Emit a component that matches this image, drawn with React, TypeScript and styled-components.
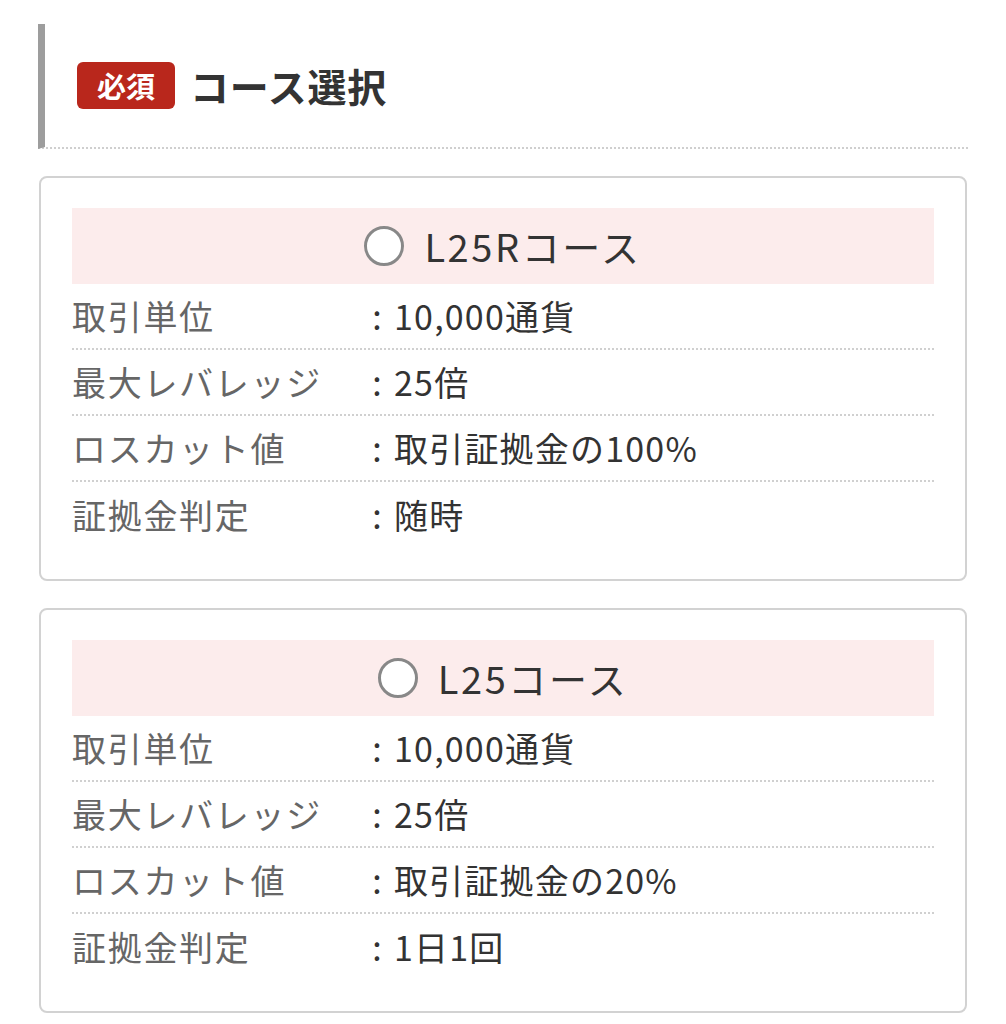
import React from 'react';
import styled, { createGlobalStyle } from 'styled-components';

const GlobalStyle = createGlobalStyle`
  * {
    box-sizing: border-box;
  }

  body {
    margin: 0;
    background: #fff;
    font-family: "Noto Sans CJK JP", "Noto Sans", sans-serif;
  }
`;

type Course = {
  name: string;
  rows: { label: string; value: string }[];
};

const courses: Course[] = [
  {
    name: 'L25Rコース',
    rows: [
      { label: '取引単位', value: '10,000通貨' },
      { label: '最大レバレッジ', value: '25倍' },
      { label: 'ロスカット値', value: '取引証拠金の100%' },
      { label: '証拠金判定', value: '随時' },
    ],
  },
  {
    name: 'L25コース',
    rows: [
      { label: '取引単位', value: '10,000通貨' },
      { label: '最大レバレッジ', value: '25倍' },
      { label: 'ロスカット値', value: '取引証拠金の20%' },
      { label: '証拠金判定', value: '1日1回' },
    ],
  },
];

export default function App() {
  return (
    <>
      <GlobalStyle />
      <Page>
        <SectionHeader>
          <Badge>必須</Badge>
          <SectionTitle>コース選択</SectionTitle>
        </SectionHeader>

        <CourseList>
          {courses.map((course) => (
            <CourseCard key={course.name}>
              <CourseHead>
                <Radio />
                <CourseName>{course.name}</CourseName>
              </CourseHead>
              {course.rows.map((row) => (
                <SpecRow key={row.label}>
                  <SpecLabel>{row.label}</SpecLabel>
                  <Colon>:</Colon>
                  <SpecValue>{row.value}</SpecValue>
                </SpecRow>
              ))}
            </CourseCard>
          ))}
        </CourseList>
      </Page>
    </>
  );
}

const Page = styled.div`
  padding: 24px 38px 0 38px;
`;

const SectionHeader = styled.div`
  display: flex;
  align-items: center;
  height: 125px;
  padding-left: 32px;
  border-left: 7px solid #9d9d9d;
  border-bottom: 2px dotted #cfcfcf;
`;

const Badge = styled.span`
  display: inline-flex;
  align-items: center;
  justify-content: center;
  height: 47px;
  padding: 0 20px;
  border-radius: 6px;
  background: #b9271c;
  color: #fff;
  font-size: 29px;
  font-weight: 700;
  line-height: 1;
`;

const SectionTitle = styled.h2`
  margin: 0 0 0 15px;
  font-size: 39px;
  font-weight: 700;
  letter-spacing: 0.8px;
  color: #333;
  line-height: 1;
`;

const CourseList = styled.div`
  display: flex;
  flex-direction: column;
  gap: 27px;
  margin-top: 27px;
`;

const CourseCard = styled.div`
  margin-left: 1px;
  margin-right: 1px;
  padding: 30px 31px 31px;
  border: 2px solid #d2d2d2;
  border-radius: 8px;
`;

const CourseHead = styled.div`
  display: flex;
  align-items: center;
  justify-content: center;
  gap: 20px;
  height: 76px;
  background: #fcecec;
`;

const Radio = styled.span`
  width: 40px;
  height: 40px;
  border-radius: 50%;
  border: 3.5px solid #888;
  background: #fff;
  flex-shrink: 0;
`;

const CourseName = styled.span`
  font-size: 38px;
  letter-spacing: 2.6px;
  color: #333;
  line-height: 1;
`;

const SpecRow = styled.div`
  display: flex;
  align-items: center;
  height: 66px;
  border-bottom: 2px dotted #d0d0d0;

  &:last-child {
    border-bottom: none;
  }
`;

const SpecLabel = styled.span`
  width: 288px;
  flex-shrink: 0;
  font-size: 34px;
  letter-spacing: 1.7px;
  color: #666;
  line-height: 1;
`;

const Colon = styled.span`
  width: 34px;
  flex-shrink: 0;
  text-align: center;
  font-size: 34px;
  color: #333;
  line-height: 1;
`;

const SpecValue = styled.span`
  font-size: 34px;
  letter-spacing: 1.2px;
  color: #333;
  line-height: 1;
`;
